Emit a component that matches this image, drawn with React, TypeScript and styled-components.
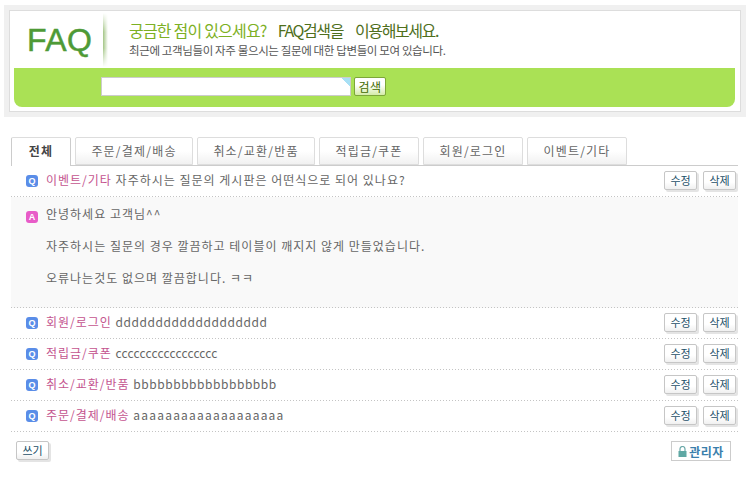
import React from 'react';
import styled, { createGlobalStyle } from 'styled-components';

const GlobalStyle = createGlobalStyle`
  html, body { margin: 0; padding: 0; background: #fff; }
  body { font-family: "Noto Sans CJK KR", "Liberation Sans", sans-serif; font-size: 12px; color: #666; }
`;

const dottedLine = `
  background-image: repeating-linear-gradient(to right, #c4c4c4 0 1px, transparent 1px 3px);
  background-position: left bottom;
  background-size: 100% 1px;
  background-repeat: no-repeat;
`;

const Page = styled.div`
  width: 750px;
  height: 479px;
  padding: 5px 4px 0;
  box-sizing: border-box;
  overflow: hidden;
`;

const SearchFrame = styled.section`
  width: 742px;
  height: 112px;
  box-sizing: border-box;
  background: #f0f0f0;
  padding: 5px;
`;

const SearchInner = styled.div`
  height: 102px;
  box-sizing: border-box;
  background: #fff;
  border: 1px solid #ddd;
  padding: 0 5px 4px 4px;
  display: flex;
  flex-direction: column;
`;

const Heading = styled.div`
  height: 57px;
  display: flex;
`;

const Logo = styled.div`
  width: 89px;
  height: 57px;
  box-sizing: border-box;
  padding: 0 0 0 13px;
  font-family: "Liberation Sans", sans-serif;
  font-size: 32px;
  line-height: 58px;
  letter-spacing: 0.4px;
  color: #4e9a36;
  -webkit-text-stroke: 0.5px #4e9a36;
`;

const LogoDivider = styled.div`
  width: 5px;
  height: 54px;
  margin-top: 2px;
  background: linear-gradient(to right, #a3c585, #fff);
  mask-image: linear-gradient(transparent, #000 35%, #000 65%, transparent);
`;

const HeadingText = styled.div`
  padding: 8px 0 0 21px;
`;

const Title = styled.h1`
  margin: 0;
  font-size: 16px;
  line-height: 22px;
  font-weight: 400;
  color: #4f6f1c;
  white-space: pre;
  display: flex;
`;

const TitleAccent = styled.span`
  color: #7db023;
  letter-spacing: -0.8px;
  margin-right: 11px;
`;

const TitlePart = styled.span`
  letter-spacing: -1.4px;
  margin-right: 12px;
`;

const Subtitle = styled.p`
  margin: 1px 0 0;
  font-size: 11.5px;
  line-height: 16px;
  letter-spacing: -0.37px;
  color: #555;
`;

const SearchBar = styled.form`
  height: 39px;
  background: #aae155;
  border-radius: 0 0 8px 8px;
  display: flex;
  align-items: flex-start;
  padding: 9px 0 0 87px;
  box-sizing: border-box;
  gap: 3px;
`;

const SearchInput = styled.div`
  width: 250px;
  height: 19px;
  box-sizing: border-box;
  background: linear-gradient(225deg, #a8e0f5 6px, #fff 6px);
  border: 1px solid #ccc;
`;

const SearchButton = styled.button`
  width: 32px;
  height: 19px;
  padding: 0;
  box-sizing: border-box;
  border: 1px solid #7da63a;
  border-radius: 2px;
  background: linear-gradient(#fff 40%, #d4eba8);
  color: #3f6a00;
  font: 12px/15px "Noto Sans CJK KR", sans-serif;
  letter-spacing: 0.4px;
`;

const Tabs = styled.ul`
  list-style: none;
  margin: 20px 0 0 7px;
  padding: 0;
  width: 727px;
  height: 29px;
  box-sizing: border-box;
  border-bottom: 1px solid #ccc;
  display: flex;
  gap: 4px;
`;

const Tab = styled.li<{ $active?: boolean; $width: number }>`
  width: ${(p) => p.$width}px;
  height: ${(p) => (p.$active ? 29 : 28)}px;
  box-sizing: border-box;
  border: 1px solid #ddd;
  border-bottom: ${(p) => (p.$active ? 'none' : '1px solid #ddd')};
  border-left-color: ${(p) => (p.$active ? '#ccc' : '#ddd')};
  border-right-color: ${(p) => (p.$active ? '#ccc' : '#ddd')};
  border-radius: 2px 2px 0 0;
  background: ${(p) => (p.$active ? '#fff' : 'linear-gradient(#fff 50%, #f1f1f1)')};
  text-align: center;
  font-size: 12px;
  line-height: 26px;
  letter-spacing: 1.2px;
  font-weight: ${(p) => (p.$active ? 700 : 400)};
  color: ${(p) => (p.$active ? '#444' : '#666')};
`;

const List = styled.div`
  margin-left: 7px;
  width: 727px;
`;

const Row = styled.div`
  height: 31px;
  box-sizing: border-box;
  ${dottedLine}
  display: flex;
  align-items: center;
  padding: 0 2px 3px 15px;
`;

const Badge = styled.span<{ $color: string; $top: number }>`
  width: 12px;
  height: 12px;
  flex: none;
  margin-top: ${(p) => p.$top}px;
  border-radius: 3px;
  background: ${(p) => p.$color};
  color: #fff;
  font: 700 9px/12px "Liberation Sans", sans-serif;
  text-align: center;
`;

const Question = styled.div`
  flex: 1;
  margin: 0 0 2px 8px;
  font-size: 12px;
  letter-spacing: 1px;
  white-space: nowrap;
`;

const Category = styled.span`
  color: #c4558f;
`;

const LatinText = styled.span<{ $spacing: number }>`
  letter-spacing: ${(p) => p.$spacing}px;
`;

const SmallButton = styled.button`
  width: 33px;
  height: 19px;
  margin-left: 6px;
  padding: 0;
  box-sizing: border-box;
  border: 1px solid #c6c6c6;
  border-radius: 2px;
  background: linear-gradient(#fff 60%, #f0f0f0);
  box-shadow: 2px 2px 0 #e4e4e4;
  color: #1c5068;
  font: 11px/15px "Noto Sans CJK KR", sans-serif;
`;

const Answer = styled.div`
  height: 111px;
  box-sizing: border-box;
  background-color: #f9f9f9;
  ${dottedLine}
  padding: 8px 0 0 15px;
  display: flex;
  align-items: flex-start;
`;

const AnswerBody = styled.div`
  margin-left: 8px;
  font-size: 12px;
  letter-spacing: 1px;
`;

const AnswerLine = styled.p`
  margin: 0 0 15px;
  line-height: 17px;
`;

const Footer = styled.div`
  margin-top: 7px;
  padding: 0 7px 0 5px;
  display: flex;
  justify-content: space-between;
  align-items: center;
`;

const WriteButton = styled(SmallButton)`
  margin-left: 0;
`;

const AdminLink = styled.a`
  width: 60px;
  height: 20px;
  margin-top: 2px;
  box-sizing: border-box;
  border: 1px solid #ccc;
  display: flex;
  align-items: center;
  justify-content: center;
  gap: 2px;
  color: #3a80ac;
  font-size: 12px;
  font-weight: 700;
  letter-spacing: 0.4px;
`;

const Lock = () => (
  <svg width="9" height="11" viewBox="0 0 9 11">
    <path d="M2 5V3a2.5 2.5 0 0 1 5 0v2" fill="none" stroke="#6aa8a8" strokeWidth="1.2" />
    <rect x="0.5" y="5" width="8" height="6" fill="#5fa8a4" />
  </svg>
);

const categories = [
  { label: '전체', width: 60, active: true },
  { label: '주문/결제/배송', width: 118 },
  { label: '취소/교환/반품', width: 118 },
  { label: '적립금/쿠폰', width: 100 },
  { label: '회원/로그인', width: 100 },
  { label: '이벤트/기타', width: 100 },
];

const questions = [
  { category: '회원/로그인', text: 'ddddddddddddddddddd', spacing: 0.55 },
  { category: '적립금/쿠폰', text: 'ccccccccccccccccc', spacing: 0.15 },
  { category: '취소/교환/반품', text: 'bbbbbbbbbbbbbbbbbb', spacing: 0.55 },
  { category: '주문/결제/배송', text: 'aaaaaaaaaaaaaaaaaaa', spacing: 1.2 },
];

const QuestionRow = ({ category, children }: { category: string; children: React.ReactNode }) => (
  <Row>
    <Badge $color="#5a8de8" $top={2}>Q</Badge>
    <Question>
      <Category>{category}</Category> {children}
    </Question>
    <SmallButton>수정</SmallButton>
    <SmallButton>삭제</SmallButton>
  </Row>
);

const App = () => (
  <Page>
    <GlobalStyle />
    <SearchFrame>
      <SearchInner>
        <Heading>
          <Logo>FAQ</Logo>
          <LogoDivider />
          <HeadingText>
            <Title>
              <TitleAccent>궁금한 점이 있으세요?</TitleAccent>
              <TitlePart>FAQ검색을</TitlePart>
              <TitlePart>이용해보세요.</TitlePart>
            </Title>
            <Subtitle>최근에 고객님들이 자주 물으시는 질문에 대한 답변들이 모여 있습니다.</Subtitle>
          </HeadingText>
        </Heading>
        <SearchBar>
          <SearchInput />
          <SearchButton type="button">검색</SearchButton>
        </SearchBar>
      </SearchInner>
    </SearchFrame>
    <Tabs>
      {categories.map((c) => (
        <Tab key={c.label} $active={c.active} $width={c.width}>
          {c.label}
        </Tab>
      ))}
    </Tabs>
    <List>
      <QuestionRow category="이벤트/기타">자주하시는 질문의 게시판은 어떤식으로 되어 있나요?</QuestionRow>
      <Answer>
        <Badge $color="#e85cc8" $top={6}>A</Badge>
        <AnswerBody>
          <AnswerLine>안녕하세요 고객님^^</AnswerLine>
          <AnswerLine>자주하시는 질문의 경우 깔끔하고 테이블이 깨지지 않게 만들었습니다.</AnswerLine>
          <AnswerLine>오류나는것도 없으며 깔끔합니다. ㅋㅋ</AnswerLine>
        </AnswerBody>
      </Answer>
      {questions.map((q) => (
        <QuestionRow key={q.category} category={q.category}>
          <LatinText $spacing={q.spacing}>{q.text}</LatinText>
        </QuestionRow>
      ))}
      <Footer>
        <WriteButton>쓰기</WriteButton>
        <AdminLink>
          <Lock />
          관리자
        </AdminLink>
      </Footer>
    </List>
  </Page>
);

export default App;
